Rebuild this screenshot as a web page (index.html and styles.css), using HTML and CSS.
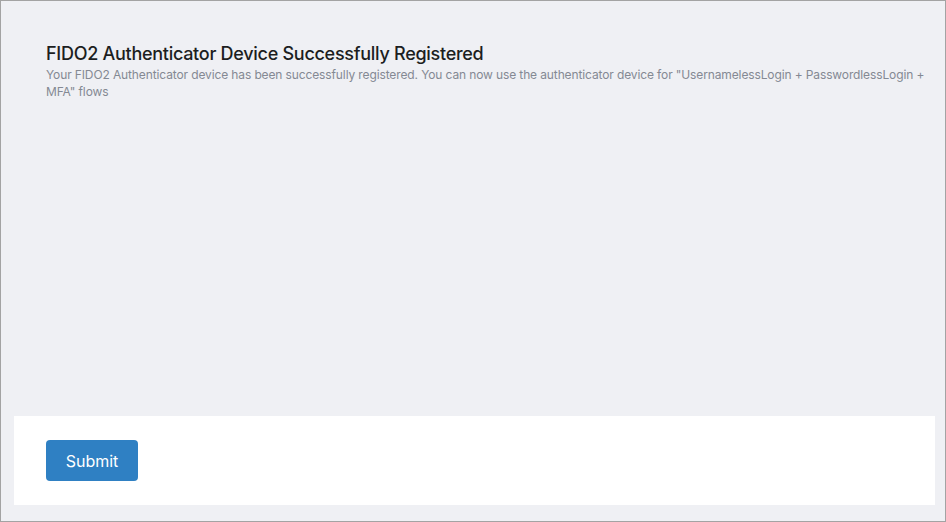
FILE: index.html
```html
<!DOCTYPE html>
<html>
<head>
<meta charset="utf-8">
<link rel="stylesheet" href="styles.css">
</head>
<body>
<div class="frame">
  <div class="content">
    <h1 class="title">FIDO2 Authenticator Device Successfully Registered</h1>
    <p class="desc">Your FIDO2 Authenticator device has been successfully registered. You can now use the authenticator device for "UsernamelessLogin + PasswordlessLogin + MFA" flows</p>
  </div>
  <div class="footer">
    <button class="btn">Submit</button>
  </div>
</div>
</body>
</html>
```
FILE: styles.css
```css
html, body {
  margin: 0;
  padding: 0;
}
body {
  font-family: Inter, "Noto Sans", sans-serif;
  background: #eff0f4;
}
.frame {
  box-sizing: border-box;
  width: 946px;
  height: 522px;
  border: 1px solid #a3a3a3;
  background: #eff0f4;
  display: flex;
  flex-direction: column;
}
.content {
  flex: 1;
  padding: 42px 20px 0 45px;
}
.title {
  margin: 0;
  font-size: 18px;
  font-weight: 500;
  line-height: 22px;
  color: #1c1e21;
  letter-spacing: -0.28px;
}
.desc {
  margin: 1px 0 0;
  font-size: 12px;
  line-height: 17px;
  color: #848993;
  letter-spacing: -0.12px;
}
.footer {
  background: #ffffff;
  margin: 0 10px 16px 13px;
  padding: 24px 32px;
  display: flex;
}
.btn {
  width: 92px;
  height: 41px;
  border: none;
  border-radius: 4px;
  background: #2f80c3;
  color: #ffffff;
  font-family: inherit;
  font-size: 16px;
  font-weight: 400;
  padding: 0;
}
```
